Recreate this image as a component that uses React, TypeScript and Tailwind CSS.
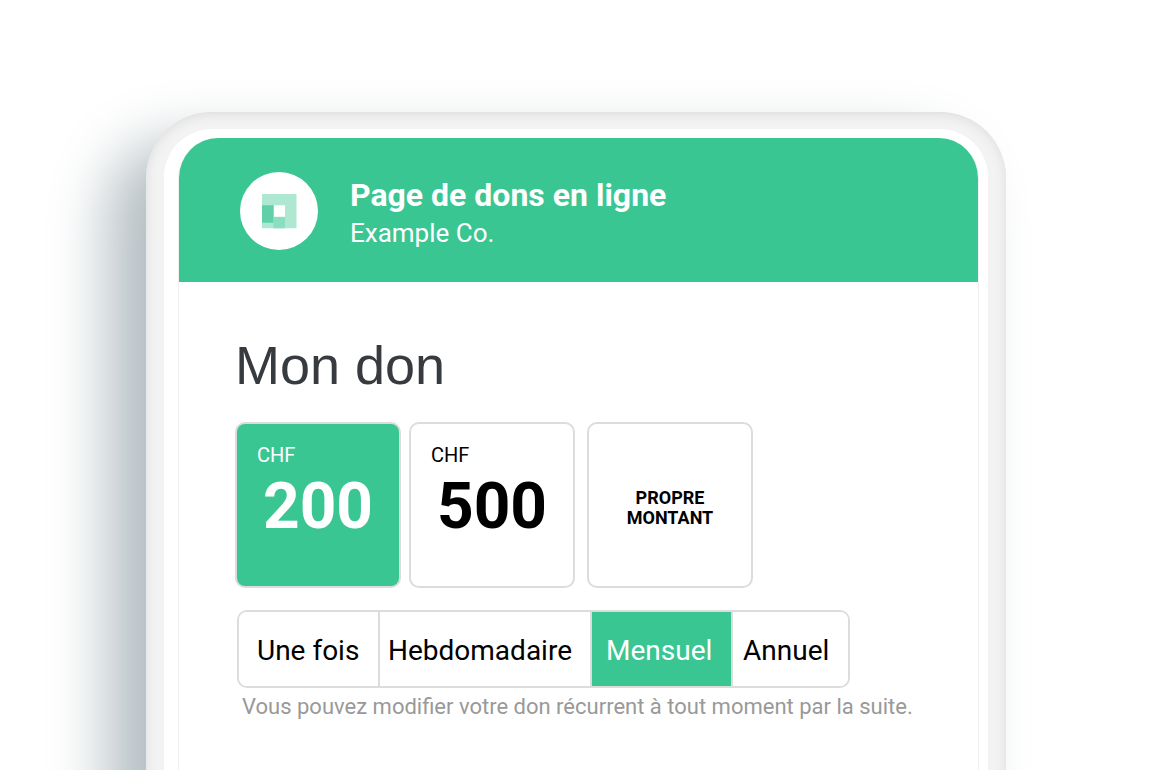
import { useState } from "react";

const amounts = [200, 500];

const frequencies = [
  { label: "Une fois", layout: "w-[141px] pl-[18px]" },
  { label: "Hebdomadaire", layout: "w-[212px] pl-2" },
  { label: "Mensuel", layout: "w-[141px] pl-[14px]" },
  { label: "Annuel", layout: "w-[115px] pl-[10px]" },
];

function Logo() {
  return (
    <span className="flex size-[78px] shrink-0 items-center justify-center rounded-full bg-white">
      <svg width="36" height="36" viewBox="0 0 36 36" aria-hidden="true">
        <path d="M1 1H35.5V35.3H1Z" fill="#aee8d3" />
        <path d="M1 12.2H12.5V29.7H1Z" fill="#5fd0a8" />
        <path d="M12.5 24H24V35.3H12.5Z" fill="#8bdec0" />
        <path d="M13 12.2H24V23.7H13Z" fill="#fff" />
      </svg>
    </span>
  );
}

function Amounts() {
  const [selected, setSelected] = useState<number | null>(200);
  const card = "flex size-[166px] flex-col rounded-[10px] border-2 border-[#dcdcdc]";
  return (
    <div className="mt-[27px] flex flex-wrap gap-3" role="group" aria-label="Montant">
      <div className="flex gap-2">
        {amounts.map((amount) => (
          <button
            key={amount}
            type="button"
            aria-pressed={selected === amount}
            onClick={() => setSelected(amount)}
            className={`${card} pt-[19px] ${selected === amount ? "bg-[#3ac692] text-white" : "bg-white text-black"}`}
          >
            <span className="self-start pl-5 text-[20px] leading-6">CHF</span>
            <span className="self-center text-[64px] leading-[80px] font-bold">{amount}</span>
          </button>
        ))}
      </div>
      <button
        type="button"
        aria-pressed={selected === null}
        onClick={() => setSelected(null)}
        className={`${card} items-center justify-center pt-[6px] text-[18px] leading-5 font-bold ${selected === null ? "bg-[#3ac692] text-white" : "bg-white text-black"}`}
      >
        <span>PROPRE</span>
        <span>MONTANT</span>
      </button>
    </div>
  );
}

function Frequency() {
  const [selected, setSelected] = useState("Mensuel");
  return (
    <div
      role="group"
      aria-label="Fréquence"
      className="mt-[22px] ml-[2px] flex h-[78px] w-fit divide-x-2 divide-[#dcdcdc] overflow-hidden rounded-[10px] border-2 border-[#dcdcdc]"
    >
      {frequencies.map(({ label, layout }) => (
        <button
          key={label}
          type="button"
          aria-pressed={selected === label}
          onClick={() => setSelected(label)}
          className={`${layout} pt-1 text-left text-[28px] leading-8 ${selected === label ? "bg-[#3ac692] text-white" : "bg-white text-black"}`}
        >
          {label}
        </button>
      ))}
    </div>
  );
}

export default function App() {
  return (
    <div className="h-screen overflow-hidden bg-white px-4 pt-28 font-['Roboto',sans-serif]">
      <div className="mx-auto min-h-screen max-w-[860px] rounded-t-[66px] border-t-2 border-[#e4e4e4] bg-[#f3f3f3] px-[18px] pt-[15px] shadow-[-38px_30px_60px_#b4bec2,inset_0_0_12px_#dcdcdc]">
        <div className="min-h-screen rounded-t-[48px] bg-white pt-[9px] pr-[9px] pl-[14px]">
          <main className="min-h-screen overflow-hidden rounded-t-[40px] border-x border-[#f0f0f0] bg-white">
            <header className="-mx-px flex h-36 items-center gap-8 bg-[#3ac692] pt-[2px] pl-[62px] text-white">
              <Logo />
              <div className="pt-[6px]">
                <h1 className="text-[32px] leading-[38px] font-bold">Page de dons en ligne</h1>
                <p className="text-[26px] leading-[38px]">Example Co.</p>
              </div>
            </header>
            <section className="px-14 pt-[53px]">
              <h2 className="font-['Liberation_Sans',sans-serif] text-[54px] leading-[60px] text-[#373a3f]">
                Mon don
              </h2>
              <Amounts />
              <Frequency />
              <p className="mt-1 ml-[7px] text-[22px] leading-[30px] text-[#999]">
                Vous pouvez modifier votre don récurrent à tout moment par la suite.
              </p>
            </section>
          </main>
        </div>
      </div>
    </div>
  );
}
